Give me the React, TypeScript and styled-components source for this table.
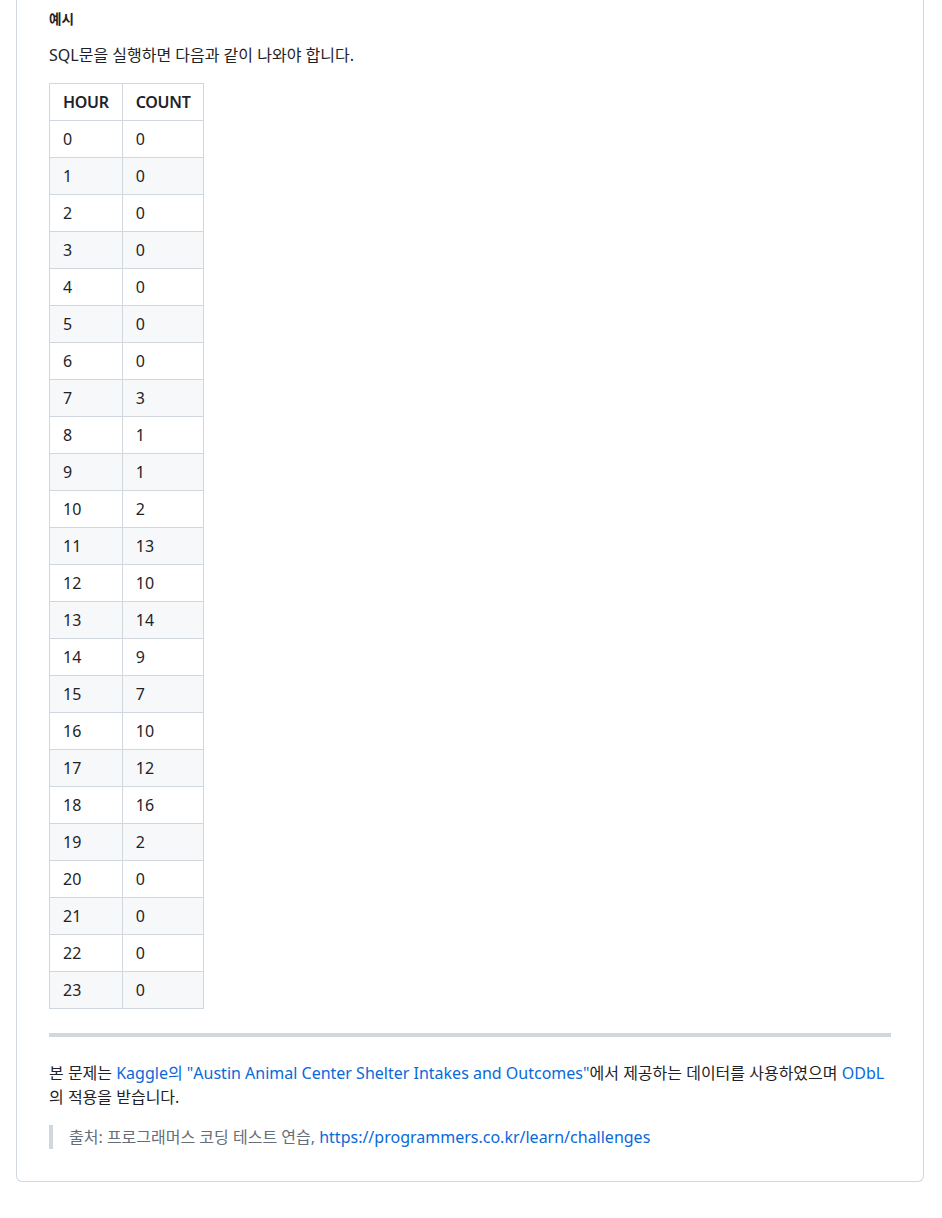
import styled, { createGlobalStyle } from "styled-components";

const GlobalStyle = createGlobalStyle`
  html, body {
    margin: 0;
    padding: 0;
    background: #ffffff;
  }
  body {
    font-family: "Segoe UI", "Noto Sans", "Noto Sans CJK KR", sans-serif;
    color: #1f2328;
  }
`;

const Page = styled.div`
  padding: 0 18px 36px 16px;
`;

const Card = styled.article`
  border: 1px solid #d0d7de;
  border-top: none;
  border-radius: 0 0 6px 6px;
  padding: 10px 32px 32px;
  font-size: 16px;
  line-height: 1.5;
`;

const Heading = styled.h6`
  margin: 0 0 16px;
  font-size: 13.6px;
  font-weight: 600;
  line-height: 1.25;
`;

const Para = styled.p`
  margin: 0 0 16px;
`;

const Link = styled.a`
  color: #0969da;
  text-decoration: none;
`;

const Table = styled.table`
  border-collapse: collapse;
  border-spacing: 0;
  margin: 0 0 16px;
`;

const Row = styled.tr<{ $alt?: boolean }>`
  background: ${(p) => (p.$alt ? "#f6f8fa" : "#ffffff")};
  border-top: 1px solid #d0d7de;
`;

const Head = styled.th`
  padding: 6px 13px;
  border: 1px solid #d0d7de;
  font-weight: 600;
  text-align: left;
  letter-spacing: -0.3px;
`;

const Cell = styled.td`
  padding: 6px 13px;
  border: 1px solid #d0d7de;
`;

const Rule = styled.hr`
  height: 4px;
  margin: 24px 0;
  padding: 0;
  border: 0;
  background: #d0d7de;
`;

const Quote = styled.blockquote`
  margin: 0;
  padding: 0 16px;
  color: #656d76;
  border-left: 4px solid #d0d7de;
`;

const counts = [0, 0, 0, 0, 0, 0, 0, 3, 1, 1, 2, 13, 10, 14, 9, 7, 10, 12, 16, 2, 0, 0, 0, 0];

export default function App() {
  return (
    <>
      <GlobalStyle />
      <Page>
        <Card>
          <Heading>예시</Heading>
          <Para>SQL문을 실행하면 다음과 같이 나와야 합니다.</Para>
          <Table>
            <thead>
              <Row>
                <Head>HOUR</Head>
                <Head>COUNT</Head>
              </Row>
            </thead>
            <tbody>
              {counts.map((c, hour) => (
                <Row key={hour} $alt={hour % 2 === 1}>
                  <Cell>{hour}</Cell>
                  <Cell>{c}</Cell>
                </Row>
              ))}
            </tbody>
          </Table>
          <Rule />
          <Para>
            본 문제는 <Link href="#">Kaggle의 "Austin Animal Center Shelter Intakes and Outcomes"</Link>에서 제공하는 데이터를 사용하였으며{" "}
            <Link href="#">ODbL</Link>의 적용을 받습니다.
          </Para>
          <Quote>
            출처: 프로그래머스 코딩 테스트 연습, <Link href="#">https://programmers.co.kr/learn/challenges</Link>
          </Quote>
        </Card>
      </Page>
    </>
  );
}
